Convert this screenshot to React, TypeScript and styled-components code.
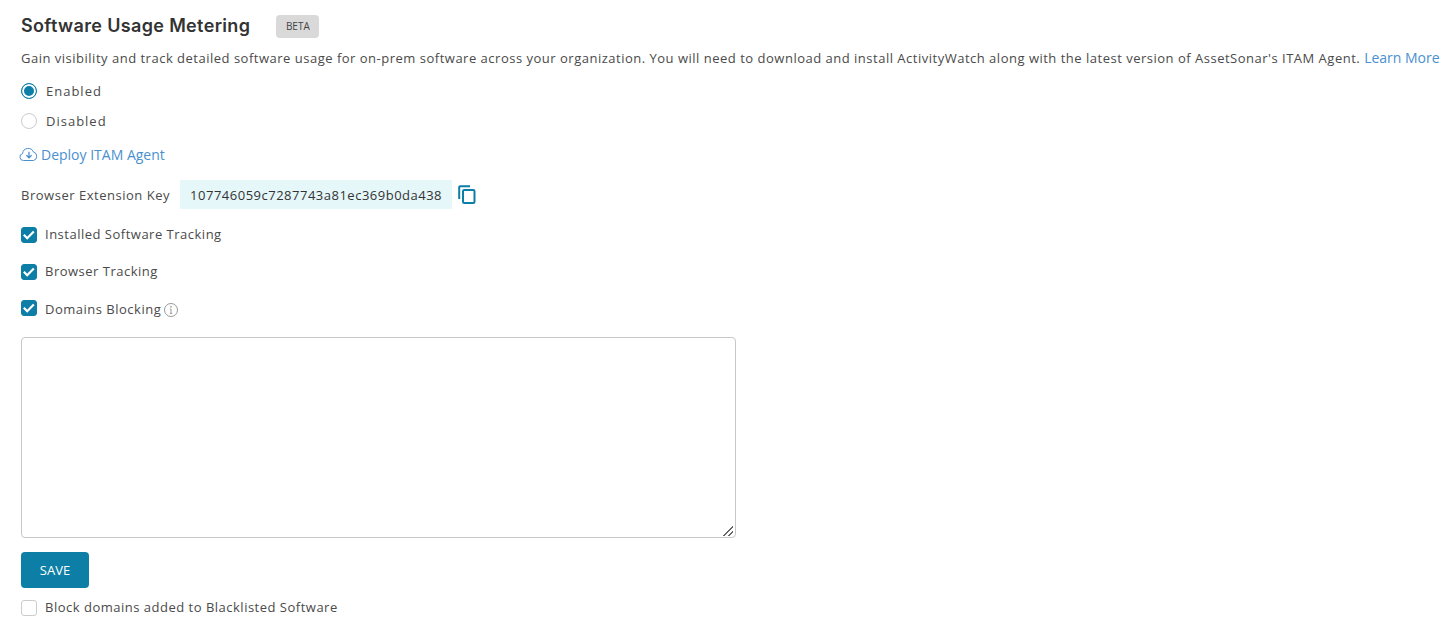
import React from "react";
import styled, { createGlobalStyle } from "styled-components";

const TEAL = "#0d7ea6";
const LINK = "#4a90d0";
const TEXT = "#4a4a4a";

const GlobalStyle = createGlobalStyle`
  html, body {
    margin: 0;
    padding: 0;
    background: #fff;
    overflow: hidden;
  }
  body {
    font-family: "Open Sans", "Liberation Sans", sans-serif;
    color: ${TEXT};
  }
`;

const Page = styled.div`
  width: 1448px;
  height: 635px;
  box-sizing: border-box;
  padding: 13px 0 0 21px;
  display: flex;
  flex-direction: column;
`;

const HeaderRow = styled.div`
  display: flex;
  align-items: center;
  height: 26px;
`;

const Title = styled.h1`
  margin: 0;
  font-family: Inter, "Open Sans", sans-serif;
  font-size: 18px;
  font-weight: 600;
  letter-spacing: 0.35px;
  color: #333;
  line-height: 26px;
  white-space: nowrap;
`;

const Badge = styled.span`
  margin-left: 26px;
  width: 43px;
  height: 23px;
  display: flex;
  align-items: center;
  justify-content: center;
  background: #d9d9d9;
  border-radius: 4px;
  font-size: 10px;
  color: #444;
`;

const Description = styled.p`
  margin: 10px 0 0;
  font-size: 13px;
  line-height: 18px;
  letter-spacing: 0.503px;
  white-space: nowrap;
`;

const Link = styled.a`
  color: ${LINK};
  text-decoration: none;
  font-size: 14px;
  letter-spacing: 0;
`;

const RadioRow = styled.label<{ $top: number }>`
  display: flex;
  align-items: center;
  height: 18px;
  margin-top: ${(p) => p.$top}px;
  gap: 9px;
  font-size: 13px;
  letter-spacing: 1px;
`;

const RadioMark = styled.span<{ $on?: boolean }>`
  width: 16px;
  height: 16px;
  box-sizing: border-box;
  border-radius: 50%;
  flex: none;
  background: ${(p) => (p.$on ? TEAL : "#fff")};
  border: 1px solid ${(p) => (p.$on ? TEAL : "#ccc")};
  box-shadow: ${(p) => (p.$on ? "inset 0 0 0 2px #fff" : "none")};
`;

const DeployLink = styled(Link)`
  display: flex;
  align-items: center;
  gap: 2px;
  margin: 14px 0 0 -2px;
  height: 20px;
`;

const KeyRow = styled.div`
  display: flex;
  align-items: center;
  margin-top: 16px;
  height: 29px;
  font-size: 13px;
  letter-spacing: 0.52px;
`;

const KeyValue = styled.span`
  margin-left: 10px;
  height: 29px;
  width: 272px;
  box-sizing: border-box;
  display: flex;
  align-items: center;
  justify-content: center;
  background: #e6f7fa;
  color: #333;
  letter-spacing: 0.5px;
`;

const CopyButton = styled.span`
  display: flex;
  margin-left: 6px;
  color: ${TEAL};
`;

const CheckRow = styled.label<{ $top: number }>`
  display: flex;
  align-items: center;
  height: 18px;
  margin-top: ${(p) => p.$top}px;
  font-size: 13px;
  letter-spacing: 0.5px;
  gap: 8px;
`;

const CheckBox = styled.span<{ $on?: boolean; $raised?: boolean }>`
  width: 16px;
  height: 16px;
  box-sizing: border-box;
  flex: none;
  display: flex;
  align-items: center;
  justify-content: center;
  margin: ${(p) => (p.$raised ? "0 0 2px" : "2px 0 0")};
  border-radius: 3px;
  background: ${(p) => (p.$on ? TEAL : "#fff")};
  border: 1px solid ${(p) => (p.$on ? TEAL : "#ccc")};
  color: #fff;
`;

const InfoIcon = styled.span`
  display: flex;
  margin: 2px 0 0 -6px;
  color: #999;
`;

const DomainsArea = styled.textarea`
  display: block;
  margin-top: 19px;
  width: 715px;
  height: 201px;
  box-sizing: border-box;
  border: 1px solid #c8c8c8;
  border-radius: 4px;
  background: #fff;
  outline: none;
  flex: none;

  &::-webkit-resizer {
    background: linear-gradient(
        135deg,
        transparent 46%,
        #666 46%,
        #666 58%,
        transparent 58%,
        transparent 72%,
        #666 72%,
        #666 84%,
        transparent 84%
      )
      right 2px bottom 1px / 10px 10px no-repeat;
  }
`;

const SaveButton = styled.button`
  margin-top: 14px;
  width: 68px;
  height: 36px;
  flex: none;
  border: 0;
  border-radius: 4px;
  background: ${TEAL};
  color: #fff;
  font-family: inherit;
  font-size: 13px;
  font-weight: 400;
  padding: 0;
`;

const Tick = () => (
  <svg width="14" height="14" viewBox="0 0 14 14" fill="none">
    <path d="M1.8 6.8 5.2 10.2 11.8 3.4" stroke="currentColor" strokeWidth="2.2" />
  </svg>
);

const CloudDownload = () => (
  <svg width="20" height="16" viewBox="0 0 20 16" fill="none" stroke="currentColor" strokeWidth="1">
    <path d="M5 14.5H4.5A3.5 3.5 0 0 1 3.6 7.6 5.6 5.6 0 0 1 14.4 6 4.4 4.4 0 0 1 14.6 14.5Z" />
    <path d="M10 5.8v5.8M7.4 9.2l2.6 2.6 2.6-2.6" strokeWidth="1.3" />
  </svg>
);

const CopyIcon = () => (
  <svg width="18" height="19" viewBox="0 0 18 19" fill="none" stroke="currentColor" strokeWidth="2">
    <path d="M12 1.2H2.2C1.6 1.2 1.2 1.6 1.2 2.2V14" />
    <rect x="5" y="5" width="11.5" height="13" rx="1.2" />
  </svg>
);

const Info = () => (
  <svg width="16" height="16" viewBox="0 0 16 16" fill="none" stroke="currentColor">
    <circle cx="8" cy="8" r="6.5" />
    <path d="M8 7v4.4M6.8 11.4h2.4M6.9 7h1.1" />
    <circle cx="8" cy="4.8" r="0.5" />
  </svg>
);

const App: React.FC = () => {
  return (
    <Page>
      <GlobalStyle />
      <HeaderRow>
        <Title>Software Usage Metering</Title>
        <Badge>BETA</Badge>
      </HeaderRow>
      <Description>
        Gain visibility and track detailed software usage for on-prem software across your organization. You will need
        to download and install ActivityWatch along with the latest version of AssetSonar's ITAM Agent.{" "}
        <Link href="#">Learn More</Link>
      </Description>
      <RadioRow $top={15}>
        <RadioMark $on />
        Enabled
      </RadioRow>
      <RadioRow $top={12}>
        <RadioMark />
        Disabled
      </RadioRow>
      <DeployLink href="#">
        <CloudDownload />
        Deploy ITAM Agent
      </DeployLink>
      <KeyRow>
        Browser Extension Key
        <KeyValue>107746059c7287743a81ec369b0da438</KeyValue>
        <CopyButton>
          <CopyIcon />
        </CopyButton>
      </KeyRow>
      <CheckRow $top={16}>
        <CheckBox $on>
          <Tick />
        </CheckBox>
        Installed Software Tracking
      </CheckRow>
      <CheckRow $top={19}>
        <CheckBox $on>
          <Tick />
        </CheckBox>
        Browser Tracking
      </CheckRow>
      <CheckRow $top={20}>
        <CheckBox $on $raised>
          <Tick />
        </CheckBox>
        Domains Blocking
        <InfoIcon>
          <Info />
        </InfoIcon>
      </CheckRow>
      <DomainsArea />
      <SaveButton>SAVE</SaveButton>
      <CheckRow $top={10}>
        <CheckBox />
        Block domains added to Blacklisted Software
      </CheckRow>
    </Page>
  );
};

export default App;
